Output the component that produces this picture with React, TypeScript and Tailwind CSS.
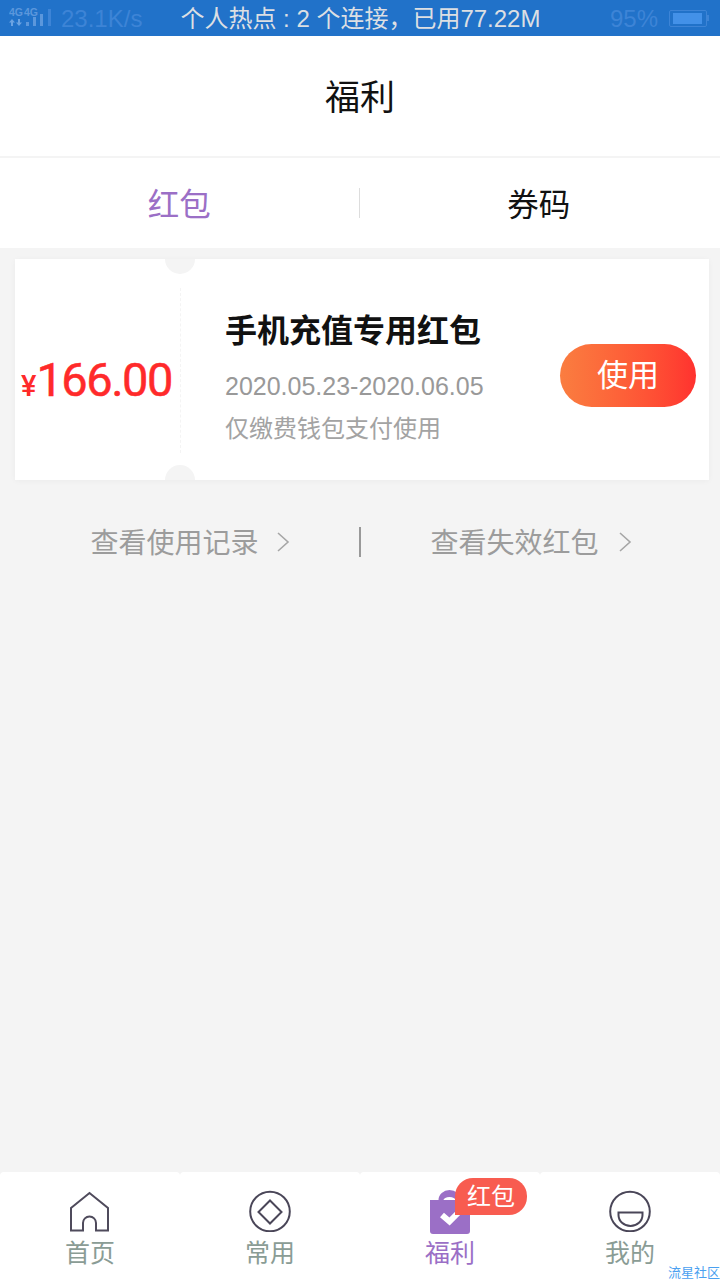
import type { ReactNode } from "react";

const FONT = "font-['Liberation_Sans','Noto_Sans_CJK_SC',sans-serif]";

function StatusBar() {
  return (
    <div className="flex h-9 shrink-0 items-center bg-[#2172c9] pt-[2px] pl-[9px] pr-[11px]">
      <svg width="43" height="22" viewBox="0 0 43 22" className="mt-[-2px] shrink-0">
        <text x="0" y="9" fontSize="10.5" fontWeight="700" fill="#5b97dc" fontFamily="Liberation Sans">4G</text>
        <text x="15" y="9" fontSize="10.5" fontWeight="700" fill="#5b97dc" fontFamily="Liberation Sans">4G</text>
        <path d="M0 15.500L3 12l3 3.500H4V19H2v-3.500zM7 15.500h2V12h2v3.500h2L10 19z" fill="#6ba3e2" />
        <path d="M17 15h3v4h-3zM24 10h3v9h-3zM31 7h3v12h-3z" fill="#5b97dc" />
        <path d="M39 2h3v17h-3z" fill="#3d84d6" />
      </svg>
      <span className="ml-[9px] text-[24px] leading-none text-[#3d84d6]">23.1K/s</span>
      <span className="ml-[38px] text-[24px] leading-none whitespace-nowrap text-[#dcdfe3]">个人热点 : 2 个连接，已用77.22M</span>
      <span className="ml-auto text-[24px] leading-none text-[#3d84d6]">95%</span>
      <div className="mt-[-2px] ml-[11px] flex items-center">
        <div className="h-[17px] w-[38px] rounded-[2px] border border-[#3d84d6] pt-[2px] pr-[4px] pb-[2px] pl-[3px]">
          <div className="h-full w-full bg-[#4391e8]" />
        </div>
        <div className="h-[6px] w-[2px] bg-[#3d84d6]" />
      </div>
    </div>
  );
}

function Chevron() {
  return (
    <svg width="14" height="20" viewBox="0 0 14 20" fill="none" className="shrink-0">
      <path d="M2 1l10 9-10 9" stroke="#a6a6a6" strokeWidth="1.6" />
    </svg>
  );
}

function RecordLink({ label, className }: { label: string; className: string }) {
  return (
    <div className={`flex flex-1 items-center text-[28px] leading-none text-[#9c9c9c] ${className}`}>
      <span className="pt-[3px]">{label}</span>
      <Chevron />
    </div>
  );
}

function Coupon() {
  return (
    <div className="relative mx-[15px] mt-[11px] flex h-[221px] w-[694px] items-center overflow-hidden bg-white shadow-[0_1px_6px_rgba(0,0,0,0.04)]">
      <div className="absolute left-[150px] top-[-15px] h-[30px] w-[30px] rounded-full bg-[#f4f4f4]" />
      <div className="absolute bottom-[-15px] left-[150px] h-[30px] w-[30px] rounded-full bg-[#f4f4f4]" />
      <div className="absolute left-[165px] top-[29px] h-[165px] border-l border-dashed border-[#f4f4f4]" />
      <div className="flex w-[210px] shrink-0 items-baseline pl-[6px] pt-[20px] font-['Roboto','Liberation_Sans',sans-serif] text-[#ff2a2a]">
        <span className="text-[29px] leading-none font-medium">¥</span>
        <span className="text-[47px] leading-none tracking-[-1.5px] [-webkit-text-stroke:0.5px_#ff2a2a]">166.00</span>
      </div>
      <div className="flex min-w-0 flex-1 flex-col self-start pt-[52px]">
        <div className="text-[32px] leading-[40px] font-bold whitespace-nowrap text-[#111111]">手机充值专用红包</div>
        <div className="mt-[20px] text-[25px] leading-[30px] whitespace-nowrap text-[#999999]">2020.05.23-2020.06.05</div>
        <div className="mt-[13px] text-[24px] leading-[30px] whitespace-nowrap text-[#a3a3a3]">仅缴费钱包支付使用</div>
      </div>
      <button className="mt-[12px] mr-[13px] flex h-[63px] w-[136px] shrink-0 items-center justify-center rounded-full bg-gradient-to-r from-[#fa7d40] to-[#ff312f] text-[31px] leading-none text-white">
        使用
      </button>
    </div>
  );
}

function TabItem({ icon, label, active }: { icon: ReactNode; label: string; active?: boolean }) {
  return (
    <div className="flex flex-1 flex-col items-center rounded-t-[4px] bg-white pt-[18px]">
      <div className="relative h-[42px] w-[42px]">{icon}</div>
      <span className={`mt-[7px] text-[25px] leading-[28px] ${active ? "text-[#9b6fc6]" : "text-[#8a9c95]"}`}>{label}</span>
    </div>
  );
}

const HomeIcon = (
  <svg width="42" height="42" viewBox="0 0 42 42" fill="none">
    <path d="M2 18L20.500 3 39 18v22.500H27V33a6.500 6.500 0 0 0-13 0v7.500H2z" stroke="#4f4b5c" strokeWidth="2" />
  </svg>
);

const CommonIcon = (
  <svg width="42" height="42" viewBox="0 0 42 42" fill="none">
    <circle cx="21" cy="21.500" r="19.800" stroke="#4a4658" strokeWidth="2" />
    <path d="M21 10.500L32.500 22 21 33.500 9.500 22z" stroke="#4a4658" strokeWidth="2" />
  </svg>
);

const WelfareIcon = (
  <>
    <svg width="42" height="44" viewBox="0 0 42 44">
      <path d="M9.500 10a11 10 0 0 1 22 0h-5a6 3 0 0 0-12 0z" fill="#9b6fc6" />
      <path d="M1 10h40v31a3 3 0 0 1-3 3H4a3 3 0 0 1-3-3z" fill="#9b6fc6" />
      <path d="M13 25l7.500 6.500L29 23" fill="none" stroke="#ffffff" strokeWidth="6" />
    </svg>
    <div className="absolute left-[26px] top-[-12px] flex h-[37px] w-[72px] items-center justify-center rounded-t-[18px] rounded-br-[18px] bg-[#f85c50] text-[24px] leading-none text-white">
      红包
    </div>
  </>
);

const MineIcon = (
  <svg width="42" height="42" viewBox="0 0 42 42" fill="none">
    <circle cx="21" cy="21.500" r="19.800" stroke="#4a4658" strokeWidth="2" />
    <path d="M9.500 22.500h24V25a12 11 0 0 1-24 0z" stroke="#4a4658" strokeWidth="2" />
  </svg>
);

export default function App() {
  return (
    <div className={`${FONT} relative flex h-[1280px] w-[720px] flex-col overflow-hidden bg-[#f4f4f4]`}>
      <StatusBar />
      <div className="flex h-[120px] shrink-0 items-center justify-center bg-white pt-[3px] text-[35px] leading-none text-[#111111]">福利</div>
      <div className="mt-[2px] flex h-[90px] shrink-0 items-center bg-white pr-[2px] text-[31.5px] leading-none">
        <div className="flex-1 pt-[5px] text-center text-[#9b6fc6]">红包</div>
        <div className="h-[30px] w-px bg-[#dddddd]" />
        <div className="flex-1 pt-[5px] text-center text-[#111111]">券码</div>
      </div>
      <Coupon />
      <div className="mt-[47px] flex h-[30px] shrink-0 items-center">
        <RecordLink label="查看使用记录" className="justify-end gap-[17px] pr-[69px]" />
        <div className="h-[30px] w-[2px] bg-[#999999]" />
        <RecordLink label="查看失效红包" className="justify-start gap-[19px] pl-[70px]" />
      </div>
      <div className="flex-1" />
      <div className="flex h-[108px] shrink-0">
        <TabItem icon={HomeIcon} label="首页" />
        <TabItem icon={CommonIcon} label="常用" />
        <TabItem icon={WelfareIcon} label="福利" active />
        <TabItem icon={MineIcon} label="我的" />
      </div>
      <span className="absolute right-0 bottom-0 text-[13px] leading-[14px] text-[#4aa0f0]">流星社区</span>
    </div>
  );
}
